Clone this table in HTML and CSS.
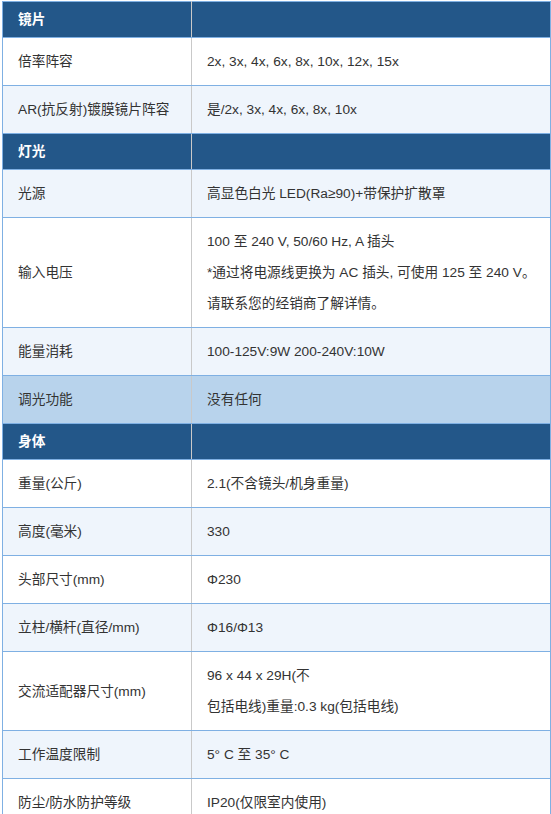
FILE: index.html
```html
<!DOCTYPE html>
<html lang="zh-CN">
<head>
<meta charset="utf-8">
<title>规格</title>
<link rel="stylesheet" href="styles.css">
</head>
<body>
<div class="wrap">
<table class="spec">
  <colgroup><col class="c1"><col class="c2"></colgroup>
  <tbody>
    <tr class="head"><td>镜片</td><td></td></tr>
    <tr><td>倍率阵容</td><td>2x, 3x, 4x, 6x, 8x, 10x, 12x, 15x</td></tr>
    <tr class="alt"><td>AR(抗反射)镀膜镜片阵容</td><td>是/2x, 3x, 4x, 6x, 8x, 10x</td></tr>
    <tr class="head"><td>灯光</td><td></td></tr>
    <tr class="alt"><td>光源</td><td>高显色白光 LED(Ra≥90)+带保护扩散罩</td></tr>
    <tr><td>输入电压</td><td>100 至 240 V, 50/60 Hz, A 插头<br>*通过将电源线更换为 AC 插头, 可使用 125 至 240 V。<br>请联系您的经销商了解详情。</td></tr>
    <tr class="alt"><td>能量消耗</td><td>100-125V:9W 200-240V:10W</td></tr>
    <tr class="hl"><td>调光功能</td><td>没有任何</td></tr>
    <tr class="head"><td>身体</td><td></td></tr>
    <tr><td>重量(公斤)</td><td>2.1(不含镜头/机身重量)</td></tr>
    <tr class="alt"><td>高度(毫米)</td><td>330</td></tr>
    <tr><td>头部尺寸(mm)</td><td>Φ230</td></tr>
    <tr class="alt"><td>立柱/横杆(直径/mm)</td><td>Φ16/Φ13</td></tr>
    <tr><td>交流适配器尺寸(mm)</td><td>96 x 44 x 29H(不<br>包括电线)重量:0.3 kg(包括电线)</td></tr>
    <tr class="alt"><td>工作温度限制</td><td>5° C 至 35° C</td></tr>
    <tr><td>防尘/防水防护等级</td><td>IP20(仅限室内使用)</td></tr>
  </tbody>
</table>
</div>
</body>
</html>
```

FILE: styles.css
```css
html, body {
  margin: 0;
  padding: 0;
  background: #ffffff;
}
body {
  font-family: "Liberation Sans", "Noto Sans CJK SC", sans-serif;
  font-size: 13.7px;
  color: #333333;
}
.wrap {
  padding: 1px 0 0 2px;
}
.spec {
  width: 549px;
  border-collapse: collapse;
  border: 1px solid #7fb0e3;
  table-layout: fixed;
}
.spec .c1 { width: 189px; }
.spec td {
  padding: 8px 15px;
  line-height: 31px;
  border-bottom: 1px solid #7fb0e3;
  vertical-align: middle;
  background: #ffffff;
}
.spec td:first-child {
  border-right: 1px solid #c9c9c9;
}
.spec td:last-child {
  padding-right: 4px;
  white-space: nowrap;
}
.spec tr.alt td { background: #eff5fc; }
.spec tr.hl td { background: #b8d3ec; }
.spec tr.head td {
  background: #235789;
  color: #ffffff;
  font-weight: bold;
  padding: 2px 15px;
}
```
